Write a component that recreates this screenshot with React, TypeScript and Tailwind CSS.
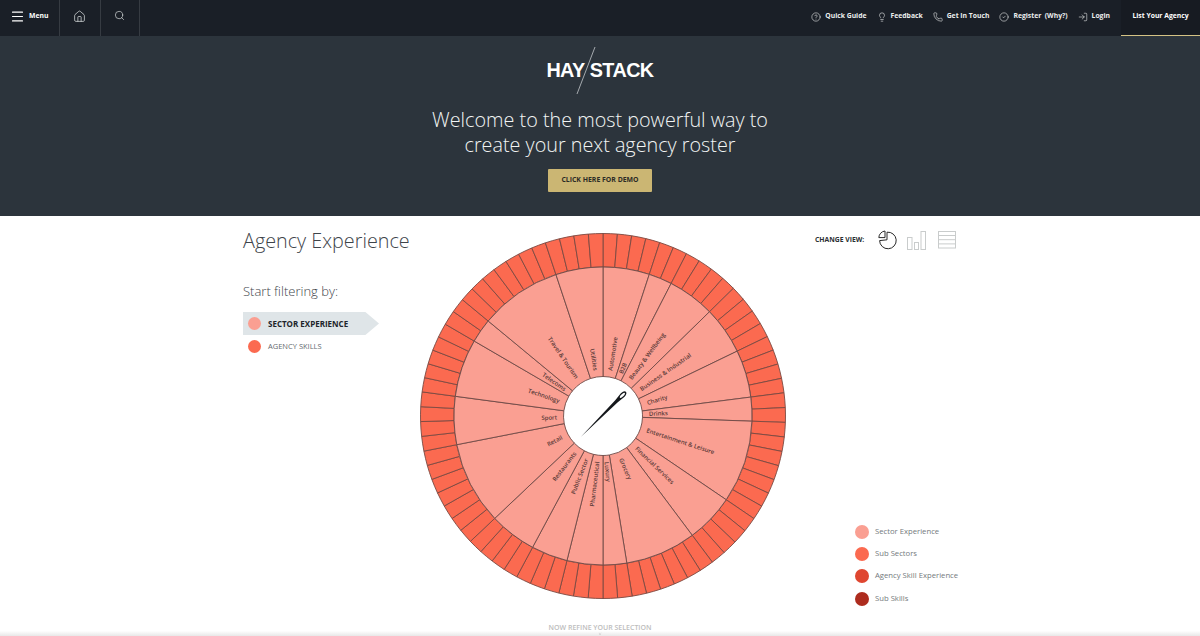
import { ChevronsDown, CircleCheck, CircleHelp, Home, Lightbulb, LogIn, Menu, Phone, Search } from "lucide-react";

const sectors = [
  { name: "Automotive", from: 0, to: 18.1 },
  { name: "B2B", from: 18.1, to: 27.2 },
  { name: "Beauty & Wellbeing", from: 27.2, to: 45.6 },
  { name: "Business & Industrial", from: 45.6, to: 64.2 },
  { name: "Charity", from: 64.2, to: 82.7 },
  { name: "Drinks", from: 82.7, to: 92 },
  { name: "Entertainment & Leisure", from: 92, to: 124.2 },
  { name: "Financial Services", from: 124.2, to: 143.2 },
  { name: "Grocery", from: 143.2, to: 170.8 },
  { name: "Luxury", from: 170.8, to: 180 },
  { name: "Pharmaceutical", from: 180, to: 194 },
  { name: "Public Sector", from: 194, to: 208.2 },
  { name: "Restaurants", from: 208.2, to: 226.6 },
  { name: "Retail", from: 226.6, to: 258.9 },
  { name: "Sport", from: 258.9, to: 277.6 },
  { name: "Technology", from: 277.6, to: 300.2 },
  { name: "Telecoms", from: 300.2, to: 309.6 },
  { name: "Travel & Tourism", from: 309.6, to: 341.6 },
  { name: "Utilities", from: 341.6, to: 360 },
];

const navLinks = [
  { label: "Quick Guide", icon: CircleHelp },
  { label: "Feedback", icon: Lightbulb },
  { label: "Get In Touch", icon: Phone },
  { label: "Register  (Why?)", icon: CircleCheck },
  { label: "Login", icon: LogIn },
];

const legend = [
  { label: "Sector Experience", color: "bg-[#fa9f92]" },
  { label: "Sub Sectors", color: "bg-[#fb6a50]" },
  { label: "Agency Skill Experience", color: "bg-[#df4630]" },
  { label: "Sub Skills", color: "bg-[#ad2c1e]" },
];

const cx = 184;
const cy = 184;

function point(r: number, deg: number) {
  const a = (deg * Math.PI) / 180;
  return `${(cx + r * Math.sin(a)).toFixed(2)} ${(cy - r * Math.cos(a)).toFixed(2)}`;
}

function slice(r0: number, r1: number, from: number, to: number) {
  return `M${point(r0, from)} L${point(r1, from)} A${r1} ${r1} 0 0 1 ${point(r1, to)} L${point(r0, to)} A${r0} ${r0} 0 0 0 ${point(r0, from)} Z`;
}

function Wheel() {
  return (
    <svg width="369" height="369" viewBox="0 0 369 369" className="block">
      {sectors.map((s) => {
        const count = Math.max(1, Math.round((s.to - s.from) / 4.6));
        const step = (s.to - s.from) / count;
        return Array.from({ length: count }, (_, i) => (
          <path
            key={s.name + i}
            d={slice(149, 182.5, s.from + i * step, s.from + (i + 1) * step)}
            fill="#fb6a50"
            stroke="#7a4a42"
            strokeWidth="0.9"
          />
        ));
      })}
      {sectors.map((s) => (
        <path key={s.name} d={slice(39.5, 149, s.from, s.to)} fill="#fa9f92" stroke="#6e4a46" strokeWidth="0.9" />
      ))}
      {sectors.map((s) => {
        const mid = (s.from + s.to) / 2;
        const a = (mid * Math.PI) / 180;
        const x = cx + 46 * Math.sin(a);
        const y = cy - 46 * Math.cos(a);
        const right = mid < 180;
        return (
          <text
            key={s.name}
            x={x}
            y={y}
            dy="0.35em"
            textAnchor={right ? "start" : "end"}
            transform={`rotate(${right ? mid - 90 : mid + 90} ${x} ${y})`}
            className="fill-[#5b3a38] font-['Open_Sans',sans-serif] text-[6px] font-semibold"
          >
            {s.name}
          </text>
        );
      })}
      {/* needle */}
      <g transform={`translate(162 204.7) rotate(-45)`}>
        <path d="M0 0 L50 -1.6 Q55 -2.2 59 -2.6 Q63.5 -2.2 63.5 0 Q63.5 2.2 59 2.6 Q55 2.2 50 1.6 Z" fill="#15181c" />
        <ellipse cx="58.5" cy="0" rx="3.4" ry="1.2" fill="#fff" />
      </g>
    </svg>
  );
}

function PieIcon() {
  return (
    <svg width="20" height="20" viewBox="0 0 20 20" fill="none" stroke="#2a2a2a" strokeWidth="1">
      <path d="M9 2.2 A8.3 8.3 0 1 1 1.6 10.6 L9 9.8 Z" />
      <path d="M7 1 V7.6 H0.8 A7 7 0 0 1 7 1 Z" />
    </svg>
  );
}

function BarsIcon() {
  return (
    <svg width="19" height="19" viewBox="0 0 19 19" fill="none" stroke="#c9cccc" strokeWidth="1">
      <rect x="0.5" y="6.5" width="4.5" height="12" />
      <rect x="7.5" y="11.5" width="4" height="7" />
      <rect x="14" y="0.5" width="4.5" height="18" />
    </svg>
  );
}

function TableIcon() {
  return (
    <svg width="18" height="18" viewBox="0 0 18 18" fill="none" stroke="#c9cccc" strokeWidth="1">
      <rect x="0.5" y="0.5" width="17" height="16.5" />
      <path d="M0.5 4.5H17.5M0.5 8.7H17.5M0.5 12.9H17.5" />
    </svg>
  );
}

export default function App() {
  return (
    <div className="relative flex h-[636px] w-[1200px] flex-col overflow-hidden bg-white font-['Open_Sans',sans-serif]">
      <header className="flex h-9 items-stretch justify-between bg-[#1a1f27] text-white">
        <div className="flex items-stretch">
          <div className="flex w-[60px] items-center gap-[4px] border-r border-[#363b42] pb-[3px] pl-[10px]">
            <Menu size={15} strokeWidth={1.8} />
            <span className="text-[6.8px] font-bold">Menu</span>
          </div>
          <div className="flex w-[41px] items-center justify-center border-r border-[#363b42] pb-[3px] pr-[2px]">
            <Home size={13} strokeWidth={1.4} className="text-[#d6dadb]" />
          </div>
          <div className="flex w-[39px] items-center justify-center border-r border-[#363b42] pb-[5px] pr-[2px]">
            <Search size={11} strokeWidth={1.5} className="text-[#d6dadb]" />
          </div>
        </div>
        <div className="flex items-stretch">
          <nav className="mr-[11px] flex items-center gap-[10px] pb-[3px]">
            {navLinks.map(({ label, icon: Icon }) => (
              <a key={label} className="flex items-center gap-[4px] whitespace-pre text-[6.8px] font-bold text-[#eceeee]">
                <Icon size={10} strokeWidth={1.4} />
                {label}
              </a>
            ))}
          </nav>
          <a className="flex w-[79px] items-center justify-center border-b border-[#d4c284] bg-[#171b22] pb-[3px] text-[6.8px] font-bold text-white">
            List Your Agency
          </a>
        </div>
      </header>

      <section className="flex h-[180px] flex-col items-center bg-[#2c343c] text-white">
        <div className="relative mt-[21px] flex h-7 items-center font-['Liberation_Sans',sans-serif] text-[19.8px] font-bold tracking-[-0.55px]">
          <span>HAY</span>
          <span className="ml-[5px]">STACK</span>
          <svg width="22" height="50" viewBox="0 0 22 50" className="absolute left-[29px] top-[-11px]">
            <path d="M20 1 L2 48" stroke="#c3c7ca" strokeWidth="0.8" />
          </svg>
        </div>
        <h1 className="mt-[22px] text-center text-[19.8px] font-light leading-[25px] text-[#f2f4f4]">
          Welcome to the most powerful way to
          <br />
          create your next agency roster
        </h1>
        <button className="mt-[12px] flex h-[23px] w-[104px] items-center justify-center rounded-[1px] bg-[#cbb673] text-[6.9px] font-bold text-[#2b2b26]">
          CLICK HERE FOR DEMO
        </button>
      </section>

      <main className="flex-1 pl-[243px]">
        <div className="grid grid-cols-[176px_369px_1fr]">
          <div className="flex flex-col">
            <h2 className="mt-[11px] text-[19.8px] font-light leading-7 text-[#3e444a]">Agency Experience</h2>
            <p className="mt-[26px] text-[13px] font-light leading-5 text-[#3e444a]">Start filtering by:</p>
            <div className="mt-[11px] flex h-[23px] w-[136px] items-center gap-[7px] bg-[#dfe5e8] pl-[5px] [clip-path:polygon(0_0,90%_0,100%_50%,90%_100%,0_100%)]">
              <span className="size-[13px] rounded-full bg-[#fa9f92]" />
              <span className="text-[8px] font-bold text-[#20242a]">SECTOR EXPERIENCE</span>
            </div>
            <div className="flex h-[23px] items-center gap-[7px] pl-[5px]">
              <span className="size-[13px] rounded-full bg-[#fb6a50]" />
              <span className="text-[7.5px] text-[#666b70]">AGENCY SKILLS</span>
            </div>
          </div>

          <div className="pt-4">
            <Wheel />
          </div>

          <div className="flex h-[389.5px] flex-col justify-between">
            <div className="mt-[14px] ml-[27px] flex items-center">
              <span className="mr-[14px] text-[6.8px] font-bold text-[#2b2f33]">CHANGE VIEW:</span>
              <PieIcon />
              <span className="ml-[9px]"><BarsIcon /></span>
              <span className="ml-[12px]"><TableIcon /></span>
            </div>
            <ul className="ml-[67px] flex flex-col gap-[8.3px]">
              {legend.map((item) => (
                <li key={item.label} className="flex h-[14px] items-center gap-[6px] whitespace-nowrap text-[7.7px] text-[#74797d]">
                  <span className={`size-[14px] rounded-full ${item.color}`} />
                  {item.label}
                </li>
              ))}
            </ul>
          </div>
        </div>
      </main>

      <div className="absolute bottom-0 left-0 flex h-[13px] w-[1200px] flex-col items-center bg-gradient-to-b from-transparent from-[60%] to-[#e8e8e8]">
        <span className="text-[7px] font-semibold leading-[9px] text-[#bdbdbd]">NOW REFINE YOUR SELECTION</span>
        <ChevronsDown size={8} strokeWidth={1.5} className="text-[#9a9a9a]" />
      </div>
    </div>
  );
}
